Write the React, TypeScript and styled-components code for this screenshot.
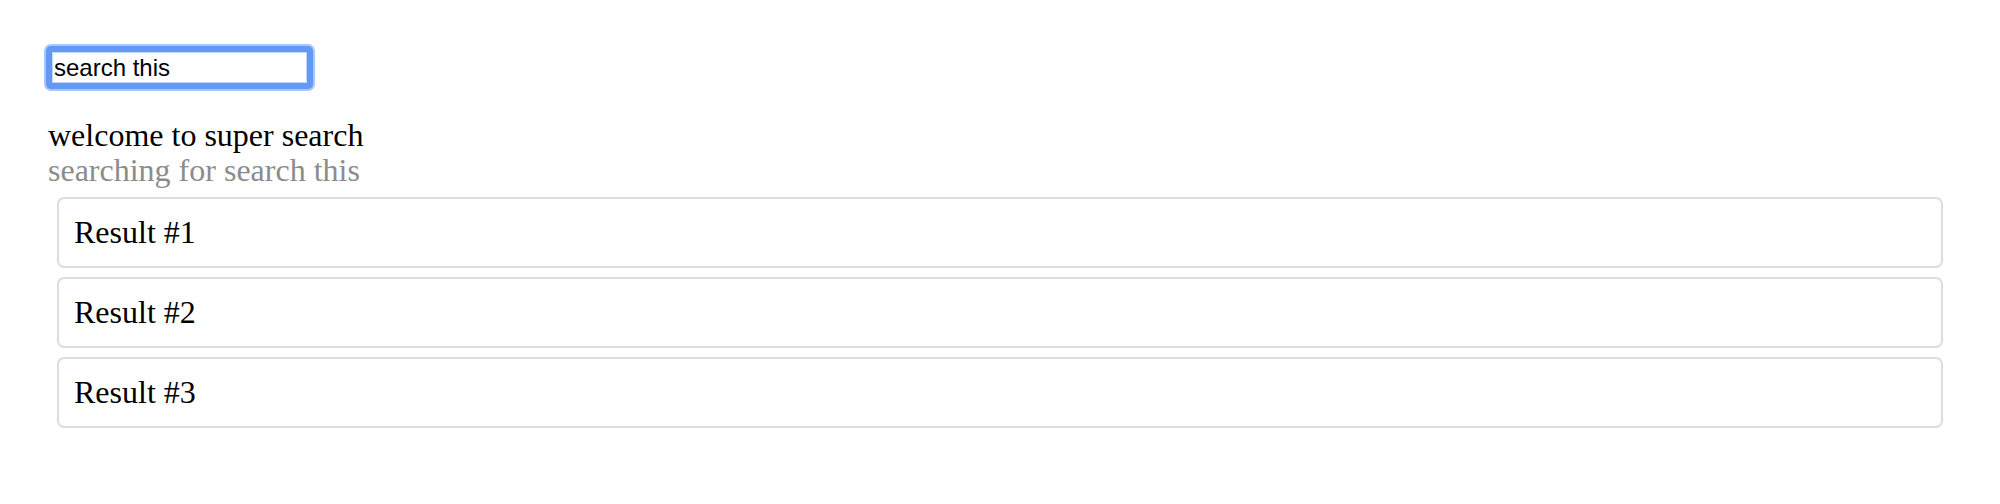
import React, { useEffect, useRef, useState } from 'react';
import styled, { createGlobalStyle } from 'styled-components';

const GlobalStyle = createGlobalStyle`
  html, body {
    margin: 0;
    padding: 0;
    background: #ffffff;
  }
`;

const Page = styled.div`
  padding: 48px;
  font-family: "Liberation Serif", "Times New Roman", serif;
  font-size: 32px;
  line-height: 35px;
  color: #000;
`;

const SearchInput = styled.input`
  display: block;
  box-sizing: border-box;
  width: 263px;
  height: 39px;
  margin: 0;
  padding: 0 2px;
  border: 4px solid #6399f3;
  border-radius: 3px;
  box-shadow: 0 0 0 2px #6399f3, 0 0 0 4px #aac7f7, inset 0 0 0 1px #c2d6f8;
  outline: none;
  font-family: "Liberation Sans", Arial, sans-serif;
  font-size: 24px;
  color: #000;
  caret-color: #000;
  background: #fff;
`;

const Intro = styled.div`
  margin-top: 31px;
`;

const Title = styled.div`
  color: #000;
`;

const Subtitle = styled.div`
  color: #8c8c8c;
`;

const ResultList = styled.div`
  display: flex;
  flex-direction: column;
  gap: 9px;
  padding: 9px;
`;

const ResultCard = styled.div`
  border: 2px solid #dddddd;
  border-radius: 7px;
  padding: 16px 15px;
`;

export default function App() {
  const [query, setQuery] = useState('search this');
  const inputRef = useRef<HTMLInputElement>(null);

  useEffect(() => {
    const el = inputRef.current;
    if (el) {
      el.focus();
      el.setSelectionRange(el.value.length, el.value.length);
    }
  }, []);

  const results = [1, 2, 3];

  return (
    <>
      <GlobalStyle />
      <Page>
        <SearchInput
          ref={inputRef}
          value={query}
          onChange={(e) => setQuery(e.target.value)}
        />
        <Intro>
          <Title>welcome to super search</Title>
          <Subtitle>searching for {query}</Subtitle>
        </Intro>
        <ResultList>
          {results.map((n) => (
            <ResultCard key={n}>Result #{n}</ResultCard>
          ))}
        </ResultList>
      </Page>
    </>
  );
}
